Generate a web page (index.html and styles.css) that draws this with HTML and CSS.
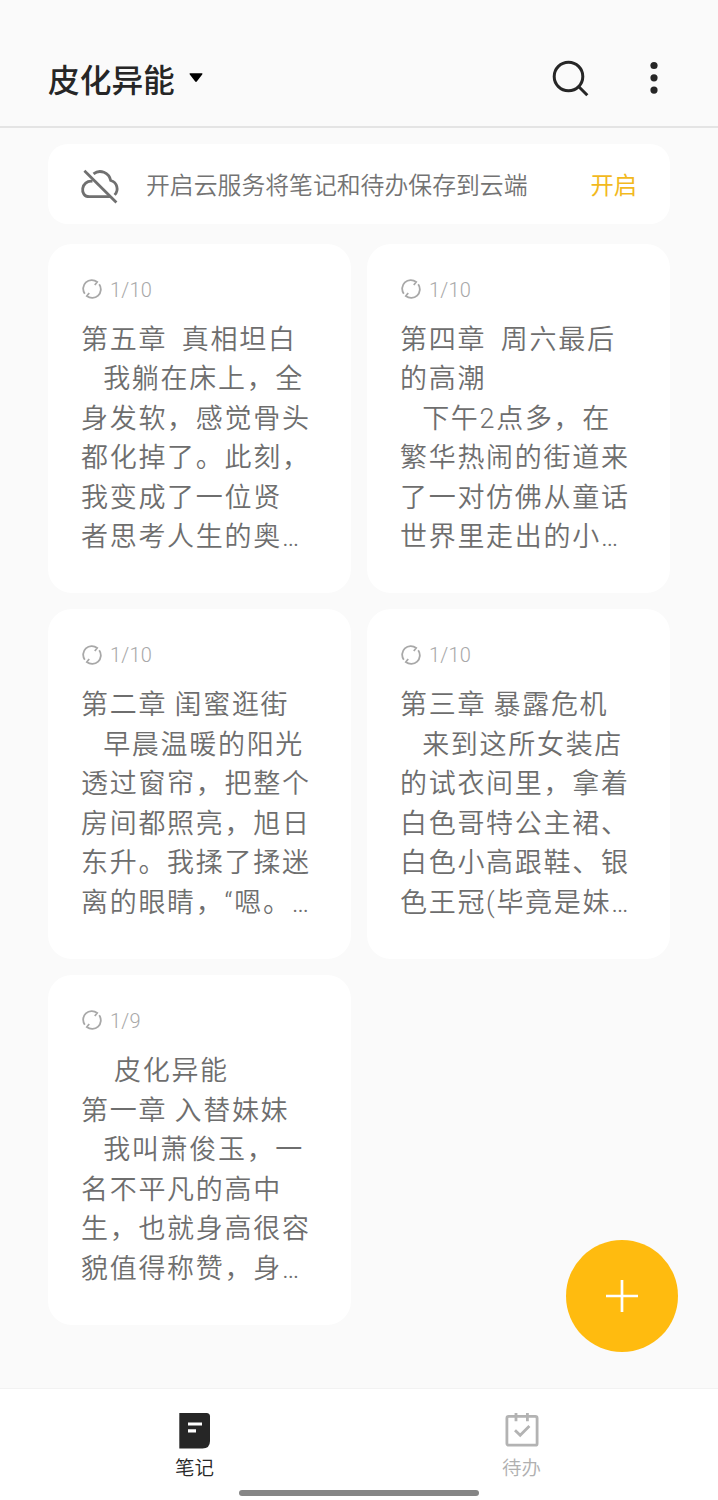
FILE: index.html
```html
<!DOCTYPE html>
<html lang="zh-CN">
<head>
<meta charset="utf-8">
<title>笔记</title>
<link rel="stylesheet" href="styles.css">
</head>
<body>
<svg class="defs" width="0" height="0" aria-hidden="true">
  <symbol id="sync" viewBox="0 0 20 20">
    <path d="M2.8 14.7A8.6 8.6 0 0 1 15.2 3L12.8 6M17.2 5.3A8.6 8.6 0 0 1 4.8 17L7.2 14" fill="none" stroke="currentColor" stroke-width="1.8"/>
  </symbol>
</svg>
<div class="app">
  <header class="header">
    <h1 class="title">皮化异能</h1>
    <svg class="caret" width="14" height="10" viewBox="0 0 14 10"><path d="M1 .3H13Q14 .5 13.2 1.5L7.8 8.6Q7 9.4 6.2 8.6L.8 1.5Q0 .5 1 .3Z" fill="#000"/></svg>
    <svg class="search" width="38" height="38" viewBox="0 0 38 38"><g fill="none" stroke="#262626" stroke-width="3"><circle cx="17.5" cy="17.5" r="14.3"/><path d="M27.8 27.8L36.3 36.3"/></g></svg>
    <svg class="more" width="8" height="34" viewBox="0 0 8 34"><g fill="#262626"><circle cx="4" cy="4.5" r="3.6"/><circle cx="4" cy="16.8" r="3.6"/><circle cx="4" cy="29.1" r="3.6"/></g></svg>
  </header>
  <main class="content">
    <section class="banner">
      <svg class="cloud" width="40" height="38" viewBox="0 0 40 38"><g fill="none" stroke="#707070" stroke-width="2.8"><path d="M13.5 5.8C20 .8 29 4.6 30.7 12.5C37.2 14.3 39.2 22 34.6 26.9"/><path d="M12.5 13.3C.8 11.8-.8 28.7 9.2 28.7H30"/><path d="M4.4 2.8L36.4 34.4"/></g></svg>
      <span class="banner-text">开启云服务将笔记和待办保存到云端</span>
      <a class="banner-action">开启</a>
    </section>
    <section class="grid">
      <article class="card">
        <div class="meta"><svg class="sync"><use href="#sync"/></svg><span>1/10</span></div>
        <div class="note">第五章  真相坦白
   我躺在床上，全
身发软，感觉骨头
都化掉了。此刻，
我变成了一位贤
者思考人生的奥…</div>
      </article>
      <article class="card">
        <div class="meta"><svg class="sync"><use href="#sync"/></svg><span>1/10</span></div>
        <div class="note">第四章  周六最后
的高潮
   下午2点多，在
繁华热闹的街道来
了一对仿佛从童话
世界里走出的小…</div>
      </article>
      <article class="card">
        <div class="meta"><svg class="sync"><use href="#sync"/></svg><span>1/10</span></div>
        <div class="note">第二章 闺蜜逛街
   早晨温暖的阳光
透过窗帘，把整个
房间都照亮，旭日
东升。我揉了揉迷
离的眼睛，“嗯。…</div>
      </article>
      <article class="card">
        <div class="meta"><svg class="sync"><use href="#sync"/></svg><span>1/10</span></div>
        <div class="note">第三章 暴露危机
   来到这所女装店
的试衣间里，拿着
白色哥特公主裙、
白色小高跟鞋、银
色王冠(毕竟是妹…</div>
      </article>
      <article class="card">
        <div class="meta"><svg class="sync"><use href="#sync"/></svg><span>1/9</span></div>
        <div class="note"><span class="indent"></span>皮化异能
第一章 入替妹妹
   我叫萧俊玉，一
名不平凡的高中
生，也就身高很容
貌值得称赞，身…</div>
      </article>
    </section>
  </main>
  <nav class="nav">
    <a class="tab active">
      <svg width="36" height="38" viewBox="0 0 36 38"><path d="M2.3 1H29.5Q33 1 33 4.5V29Q33 36.4 25.5 36.4H2.3Z" fill="#262626"/><path d="M11 12H25M11 18.8H19" stroke="#fff" stroke-width="3.2"/></svg>
      <span>笔记</span>
    </a>
    <a class="tab todo">
      <svg width="36" height="38" viewBox="0 0 36 38"><g fill="none" stroke="#b3b3b3" stroke-width="2.8"><rect x="2.9" y="4.4" width="30.2" height="28.8" rx="1.8"/><path d="M12 1V9.3M23.4 1V9.3"/><path d="M11 18.2L16.2 23.2L25.4 13.9"/></g></svg>
      <span>待办</span>
    </a>
  </nav>
  <button class="fab" aria-label="新建"><svg width="34" height="34" viewBox="0 0 34 34"><path d="M17 1V33M1 17H33" stroke="#fff" stroke-width="2.7"/></svg></button>
  <div class="home-bar"></div>
</div>
</body>
</html>
```

FILE: styles.css
```css
* { box-sizing: border-box; }
body {
  margin: 0;
  background: #fafafa;
  font-family: Roboto, "Noto Sans CJK SC", sans-serif;
  font-weight: 350;
}
.defs { position: absolute; }
.app {
  position: relative;
  display: flex;
  flex-direction: column;
  width: 718px;
  height: 1500px;
  overflow: hidden;
}
.header {
  display: flex;
  align-items: center;
  height: 128px;
  padding: 29px 60px 0 48px;
  border-bottom: 2px solid #e4e4e4;
}
.title {
  margin: 8px 0 0;
  font-size: 31.7px;
  font-weight: 500;
  line-height: 48px;
  color: #262626;
}
.caret { margin-left: 14px; margin-top: 1px; }
.search { margin-left: auto; }
.more { margin-left: 61px; }
.content { flex: 1; padding: 16px 48px 0; }
.banner {
  display: flex;
  align-items: center;
  height: 80px;
  padding: 0 33px 0 32px;
  border-radius: 20px;
  background: #fff;
}
.cloud { margin-top: 5px; }
.banner-text {
  margin-top: 4px;
  margin-left: 26px;
  font-size: 23.85px;
  line-height: 40px;
  color: #737373;
  white-space: nowrap;
}
.banner-action {
  margin-top: 4px;
  margin-left: auto;
  font-size: 23.3px;
  font-weight: 400;
  line-height: 40px;
  color: #f2b91e;
}
.grid {
  display: grid;
  grid-template-columns: 303px 303px;
  grid-auto-rows: 349.7px;
  gap: 16px;
  margin-top: 19.5px;
}
.card {
  padding: 32px 0 0 33px;
  border-radius: 24px;
  background: #fff;
}
.meta {
  display: flex;
  align-items: center;
  gap: 8px;
  height: 28px;
  color: #a8a8a8;
  font-size: 20px;
  font-weight: 300;
  letter-spacing: .2px;
}
.sync { width: 20px; height: 20px; margin: -1px 0 0 1px; }
.note {
  margin-top: 17.2px;
  font-size: 27px;
  line-height: 39.5px;
  letter-spacing: 1.7px;
  word-spacing: -.9px;
  color: #6e6e6e;
  white-space: pre;
}
.indent { display: inline-block; width: 33px; }
.nav {
  display: flex;
  height: 112px;
  padding: 0 31px;
  background: #fff;
  border-top: 1px solid #f2f2f2;
}
.tab {
  display: flex;
  flex: 1;
  flex-direction: column;
  align-items: center;
  padding-top: 23px;
  font-size: 19.5px;
  font-weight: 350;
  line-height: 30px;
  color: #b0b0b0;
}
.tab span { margin-top: 4px; }
.tab.active { color: #262626; }
.tab.todo { padding-right: 2px; }
.fab {
  position: absolute;
  left: 566px;
  top: 1240px;
  display: grid;
  place-items: center;
  width: 112px;
  height: 112px;
  padding: 0;
  border: 0;
  border-radius: 50%;
  background: #ffbb0f;
}
.home-bar {
  position: absolute;
  left: 239px;
  bottom: 4px;
  width: 240px;
  height: 6px;
  border-radius: 3px;
  background: #858585;
}
```
